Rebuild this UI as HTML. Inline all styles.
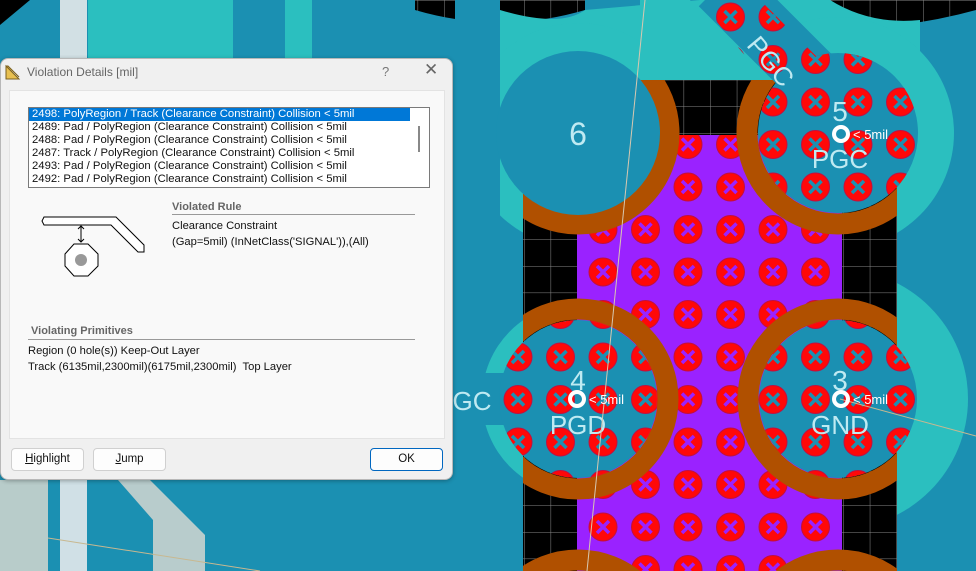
<!DOCTYPE html>
<html><head><meta charset="utf-8"><style>
*{margin:0;padding:0;box-sizing:border-box}
html{overflow:hidden;width:976px;height:571px}
body{width:976px;height:571px;overflow:hidden;position:relative;background:#1b90b2;font-family:"Liberation Sans",sans-serif}
svg{position:absolute;left:0;top:0}
.dlg{position:absolute;left:0;top:58px;width:453px;height:422px;background:#f0f0f0;border-radius:8px;border:1px solid #b8b8b8;box-shadow:0 1px 4px rgba(0,0,0,.3)}
.title{position:absolute;left:26px;top:6px;font-size:12px;color:#666}
.q{position:absolute;left:381px;top:5px;font-size:13px;color:#777}
.x{position:absolute;left:423px;top:1px;font-size:17px;color:#666}
.panel{position:absolute;left:8px;top:31px;width:436px;height:349px;background:#f9f9f9;border:1px solid #e3e3e3}
.list{position:absolute;left:27px;top:48px;width:402px;height:81px;background:#fff;border:1px solid #7a7a7a;font-size:11.3px;color:#111;overflow:hidden}
.list .r{height:13px;line-height:13px;padding-left:3px;white-space:nowrap}
.list .sel{background:#0078d7;color:#fff;width:381px}
.list .sb{position:absolute;left:389px;top:18px;width:2px;height:26px;background:#888}
.h{position:absolute;font-size:11px;font-weight:bold;color:#666}
.ln{position:absolute;height:1px;background:#999}
.t{position:absolute;font-size:11.2px;color:#111;white-space:nowrap}
.btn{position:absolute;top:389px;width:73px;height:23px;background:#fdfdfd;border:1px solid #d0d0d0;border-radius:4px;font-size:11.5px;text-align:center;line-height:21px;color:#111}
</style></head><body>
<svg width="976" height="571" viewBox="0 0 976 571">
<defs>
<pattern id="grid" x="524" y="0" width="26.6" height="26.6" patternUnits="userSpaceOnUse">
<rect width="26.6" height="26.6" fill="#000"/><path d="M0 0V26.6M0 0H26.6" stroke="#8a8a8a" stroke-width="1"/>
</pattern>
<clipPath id="cpur"><rect x="577" y="135" width="265" height="436"/></clipPath>
<clipPath id="cpad"><circle cx="838" cy="133" r="80"/><circle cx="578" cy="399" r="79"/><circle cx="838" cy="399" r="79"/><polygon points="690,-10 750,-10 835,75 795,115"/></clipPath>
<clipPath id="crect"><rect x="523" y="80" width="374" height="491"/></clipPath>
</defs>
<rect x="0" y="0" width="976" height="571" fill="#1b90b2"/>
<rect x="88" y="0" width="145" height="60" fill="#2bbfbf"/>
<rect x="285" y="0" width="27" height="60" fill="#2bbfbf"/>
<rect x="60" y="0" width="27" height="60" fill="#d2e0e4"/>
<polygon points="0,0 30,0 0,25" fill="#000"/>
<rect x="0" y="480" width="48" height="91" fill="#b8ccca"/>
<rect x="60" y="480" width="27" height="91" fill="#d0e0e6"/>
<polygon points="118,480 150,480 205,535 205,571 153,571 153,520" fill="#b8cccc"/>
<line x1="48" y1="538" x2="260" y2="571" stroke="#c8b890" stroke-width="1"/>
<path d="M415 0 H585 V10 Q500 35 415 10Z" fill="url(#grid)"/>
<path d="M830 0 H976 V10 Q940 20 900 25 Q860 20 830 5Z" fill="url(#grid)"/>
<path d="M500 10 Q560 28 585 10 L700 0 L830 0 Q870 25 920 20 L920 80 L500 80Z" fill="#2bbfbf"/>
<circle cx="578" cy="135" r="112" fill="#2bbfbf"/>
<circle cx="838" cy="133" r="116" fill="#2bbfbf"/>
<circle cx="578" cy="399" r="96" fill="#2bbfbf"/>
<circle cx="838" cy="399" r="130" fill="#2bbfbf"/>
<rect x="455" y="373" width="70" height="52" fill="#1b90b2"/>
<rect x="455" y="0" width="45" height="230" fill="#1b90b2"/>
<rect x="523" y="80" width="374" height="491" fill="url(#grid)"/>
<polygon points="640,80 750,80 690,0 640,0" fill="#2bbfbf"/>
<rect x="577" y="135" width="265" height="436" fill="#9a22ff"/>
<g clip-path="url(#cpur)" id="vp"></g>
<g clip-path="url(#crect)" fill="none" stroke="#b05000" stroke-width="21">
<circle cx="578" cy="133" r="91"/><circle cx="838" cy="133" r="91"/>
<circle cx="578" cy="399" r="90"/><circle cx="838" cy="399" r="90"/>
<circle cx="578" cy="650" r="90"/><circle cx="838" cy="650" r="90"/>
</g>
<circle cx="578" cy="133" r="82" fill="#1b90b2"/>
<circle cx="838" cy="133" r="80" fill="#1b90b2"/>
<circle cx="578" cy="399" r="79" fill="#1b90b2"/>
<circle cx="838" cy="399" r="79" fill="#1b90b2"/>
<line x1="720" y1="-15" x2="812" y2="77" stroke="#1b90b2" stroke-width="60"/>
<g clip-path="url(#cpad)" id="vb"></g>
<g fill="#bfeaf2" font-family="Liberation Sans,sans-serif" text-anchor="middle">
<text x="578" y="145" font-size="32">6</text>
<text x="840" y="121" font-size="28">5</text>
<text x="840" y="168" font-size="26">PGC</text>
<text x="578" y="390" font-size="28">4</text>
<text x="578" y="434" font-size="26">PGD</text>
<text x="840" y="390" font-size="28">3</text>
<text x="840" y="434" font-size="26">GND</text>
<text x="770" y="70" font-size="26" transform="rotate(50 770 62)">PGC</text>
<text x="472" y="410" font-size="26">GC</text>
</g>
<line x1="645" y1="0" x2="587" y2="571" stroke="#d8c8b0" stroke-width="1"/>
<line x1="840" y1="399" x2="976" y2="436" stroke="#c8b890" stroke-width="1"/>
<g fill="none" stroke="#fff" stroke-width="4">
<circle cx="841" cy="134" r="7"/><circle cx="577" cy="399" r="7"/><circle cx="841" cy="399" r="7"/>
</g>
<g fill="#fff" font-size="13" font-family="Liberation Sans,sans-serif">
<text x="853" y="139">&lt; 5mil</text><text x="589" y="404">&lt; 5mil</text><text x="853" y="404">&lt; 5mil</text>
</g>
</svg>
<script>
(function(){
var ns="http://www.w3.org/2000/svg";
function fill(id,xc){
 var g=document.getElementById(id);
 for(var i=-1;i<12;i++)for(var j=0;j<14;j++){
  var x=518+42.5*i-42.5,y=17+42.5*j;
  var c=document.createElementNS(ns,"circle");
  c.setAttribute("cx",x);c.setAttribute("cy",y);c.setAttribute("r",14);
  c.setAttribute("fill","#ff0808");c.setAttribute("stroke","#c01040");c.setAttribute("stroke-width","1");
  g.appendChild(c);
  var p=document.createElementNS(ns,"path");
  p.setAttribute("d","M"+(x-6)+" "+(y-6)+"L"+(x+6)+" "+(y+6)+"M"+(x+6)+" "+(y-6)+"L"+(x-6)+" "+(y+6));
  p.setAttribute("stroke",xc);p.setAttribute("stroke-width","3.5");
  g.appendChild(p);
 }
}
fill("vp","#9a22ff");fill("vb","#1b90b2");
})();
</script>
<div class="dlg">
<svg width="16" height="16" style="left:4px;top:5px" viewBox="0 0 16 16"><path d="M1 2 L14 15 L1 15Z M1 2 L3 2 L14 13" fill="#e8c050" stroke="#7a6020" stroke-width="1"/></svg>
<div class="title">Violation Details [mil]</div>
<div class="q">?</div><div class="x">✕</div>
<div class="panel"></div>
<div class="list">
<div class="r sel">2498: PolyRegion / Track (Clearance Constraint) Collision &lt; 5mil</div>
<div class="r">2489: Pad / PolyRegion (Clearance Constraint) Collision &lt; 5mil</div>
<div class="r">2488: Pad / PolyRegion (Clearance Constraint) Collision &lt; 5mil</div>
<div class="r">2487: Track / PolyRegion (Clearance Constraint) Collision &lt; 5mil</div>
<div class="r">2493: Pad / PolyRegion (Clearance Constraint) Collision &lt; 5mil</div>
<div class="r">2492: Pad / PolyRegion (Clearance Constraint) Collision &lt; 5mil</div>
<div class="sb"></div>
</div>
<svg width="110" height="62" style="left:40px;top:157px" viewBox="0 0 110 62">
<path d="M3 1 H75 L103 29 V36 H97 L70 9 H3 L1 5Z" fill="#fff" stroke="#000" stroke-width="1"/>
<path d="M40 10 V26 M37 13 L40 10 L43 13 M37 23 L40 26 L43 23" fill="none" stroke="#000"/>
<polygon points="33,28 47,28 57,38 57,50 47,60 33,60 24,50 24,38" fill="#fff" stroke="#000"/>
<circle cx="40" cy="44" r="6" fill="#999"/>
</svg>
<div class="h" style="left:171px;top:142px">Violated Rule</div>
<div class="ln" style="left:171px;top:155px;width:243px"></div>
<div class="t" style="left:171px;top:161px">Clearance Constraint</div>
<div class="t" style="left:171px;top:177px">(Gap=5mil) (InNetClass('SIGNAL')),(All)</div>
<div class="h" style="left:30px;top:266px">Violating Primitives</div>
<div class="ln" style="left:27px;top:280px;width:387px"></div>
<div class="t" style="left:27px;top:286px">Region (0 hole(s)) Keep-Out Layer</div>
<div class="t" style="left:27px;top:302px">Track (6135mil,2300mil)(6175mil,2300mil)&nbsp; Top Layer</div>
<div class="btn" style="left:10px"><u>H</u>ighlight</div>
<div class="btn" style="left:92px"><u>J</u>ump</div>
<div class="btn" style="left:369px;border:1px solid #0067c0">OK</div>
</div>
</body></html>
